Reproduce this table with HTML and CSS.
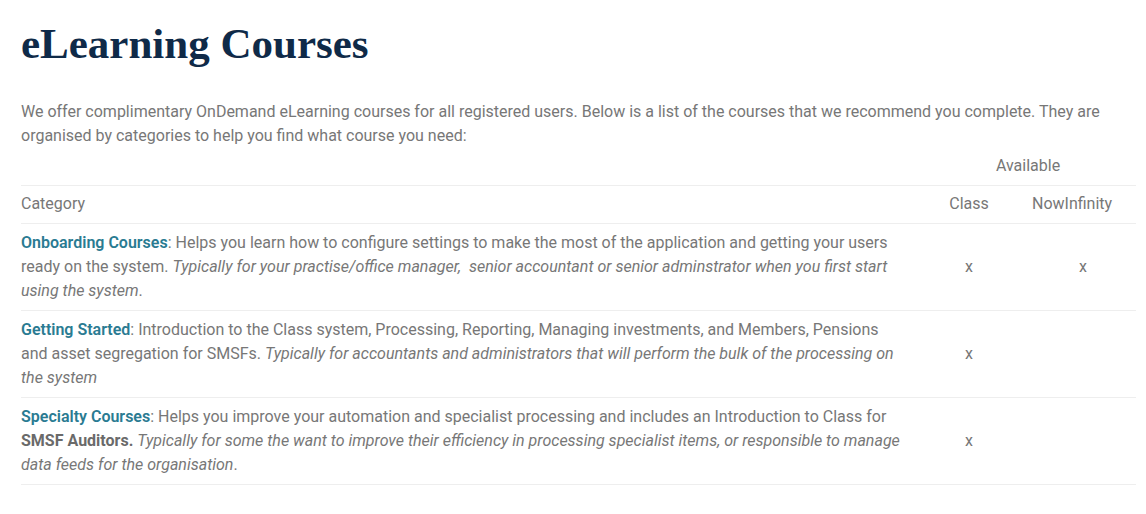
FILE: index.html
```html
<!DOCTYPE html>
<html lang="en">
<head>
<meta charset="utf-8">
<title>eLearning Courses</title>
<link rel="stylesheet" href="styles.css">
</head>
<body>
<main class="page">
  <h1 class="title">eLearning Courses</h1>
  <p class="intro">We offer complimentary OnDemand eLearning courses for all registered users. Below is a list of the courses that we recommend you complete. They are organised by categories to help you find what course you need:</p>
  <table class="courses">
    <colgroup>
      <col class="col-cat">
      <col class="col-class">
      <col class="col-now">
    </colgroup>
    <thead>
      <tr class="row-top">
        <th class="cell-blank"></th>
        <th class="cell-avail" colspan="2">Available</th>
      </tr>
      <tr>
        <th class="cell-cat">Category</th>
        <th class="cell-mark">Class</th>
        <th class="cell-head-now">NowInfinity</th>
      </tr>
    </thead>
    <tbody>
      <tr>
        <td class="cell-cat"><a class="course-link" href="#">Onboarding Courses</a>: Helps you learn how to configure settings to make the most of the application and getting your users ready on the system. <em>Typically for your practise/office manager,&nbsp; senior accountant or senior adminstrator when you first start using the system</em>.</td>
        <td class="cell-mark">x</td>
        <td class="cell-mark">x</td>
      </tr>
      <tr>
        <td class="cell-cat"><a class="course-link" href="#">Getting Started</a>: Introduction to the Class system, Processing, Reporting, Managing investments, and Members, Pensions and asset segregation for SMSFs. <em>Typically for accountants and administrators that will perform the bulk of the processing on the system</em></td>
        <td class="cell-mark">x</td>
        <td class="cell-mark"></td>
      </tr>
      <tr>
        <td class="cell-cat"><a class="course-link" href="#">Specialty Courses</a>: Helps you improve your automation and specialist processing and includes an Introduction to Class for <strong>SMSF Auditors.</strong> <em>Typically for some the want to improve their efficiency in processing specialist items, or responsible to manage data feeds for the organisation</em>.</td>
        <td class="cell-mark">x</td>
        <td class="cell-mark"></td>
      </tr>
    </tbody>
  </table>
</main>
</body>
</html>
```
FILE: styles.css
```css
html, body {
  margin: 0;
  padding: 0;
  background: #ffffff;
}

body {
  font-family: Roboto, "Liberation Sans", Arial, sans-serif;
  font-size: 16px;
  line-height: 24px;
  color: #777777;
}

.page {
  padding: 0 10px 0 21px;
}

.title {
  font-family: "Liberation Serif", "Times New Roman", serif;
  font-weight: 700;
  font-size: 43px;
  line-height: 52px;
  color: #0f2a48;
  margin: 18px 0 0;
}

.intro {
  margin: 30px 0 0;
}

.courses {
  width: 100%;
  border-collapse: collapse;
  table-layout: fixed;
}

.col-cat { width: 887px; }
.col-class { width: 122px; }
.col-now { width: 106px; }

.courses th,
.courses td {
  padding: 6px 0 7px;
  font-weight: 400;
  vertical-align: middle;
  border-bottom: 1px solid #eeeeee;
}

.courses tbody td {
  padding: 7px 0 7px;
}

.courses .row-top .cell-blank {
  border-bottom: 1px solid #eeeeee;
}

.cell-cat {
  text-align: left;
}

.cell-mark {
  text-align: center;
}

.courses .cell-avail {
  text-align: center;
  padding-left: 12px;
}

.courses .cell-head-now {
  text-align: left;
  padding-left: 2px;
}

.course-link {
  color: #2a7b92;
  font-weight: 600;
  text-decoration: none;
}

.courses strong {
  font-weight: 700;
  color: #6a6a6a;
}

.courses em {
  font-style: italic;
}
```
